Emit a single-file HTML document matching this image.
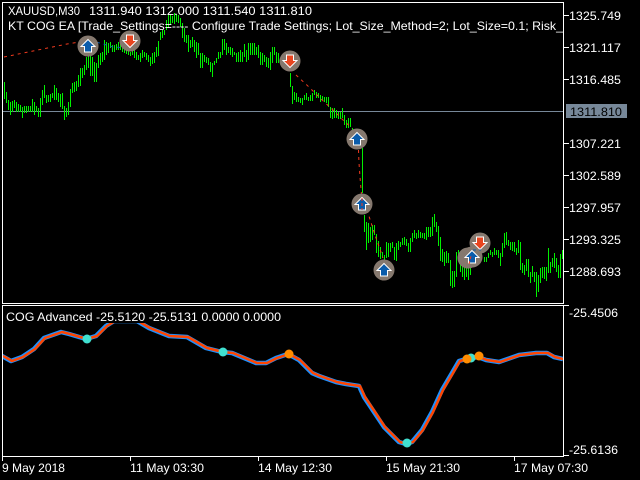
<!DOCTYPE html>
<html><head><meta charset="utf-8"><style>
html,body{margin:0;padding:0;background:#000;width:640px;height:480px;overflow:hidden}
svg{display:block}
text{font-family:"Liberation Sans",sans-serif;font-size:12px;fill:#fff}
</style></head><body>
<svg width="640" height="480" viewBox="0 0 640 480" xmlns="http://www.w3.org/2000/svg">
<defs>
<clipPath id="m"><rect x="3" y="3" width="560" height="300"/></clipPath>
<clipPath id="s"><rect x="3" y="323" width="560" height="133"/></clipPath>
<g id="up"><circle r="10.5" fill="#85786e"/><path d="M0-6.5L7 0.5H3.5V6H-3.5V0.5H-7Z" fill="#0a5cab" stroke="#fff" stroke-width="1"/></g>
<g id="dn"><circle r="10.5" fill="#85786e"/><path d="M0 6.5L7-0.5H3.5V-6H-3.5V-0.5H-7Z" fill="#e8451f" stroke="#fff" stroke-width="1"/></g>
</defs>
<rect width="640" height="480" fill="#000"/>
<rect x="3" y="111" width="560" height="1" fill="#778899"/>
<g clip-path="url(#m)">
<g transform="translate(.5 0)"><path fill="none" stroke="#00f000" stroke-width="1" shape-rendering="crispEdges" d="M4 82V99M6 92V103M8 100V110M10 102V115M12 101V112M14 100V108M16 102V112M18 104V112M20 105V112M22 107V118M24 106V113M26 106V113M28 106V112M30 106V112M32 99V112M34 102V115M36 106V112M38 108V117M40 98V117M42 90V105M44 85V98M46 95V103M48 95V102M50 94V102M52 93V98M54 85V100M56 88V100M58 93V102M60 94V107M62 93V109M64 106V120M66 108V117M68 102V115M70 89V107M72 83V93M74 82V92M76 81V91M78 75V87M80 68V86M82 68V78M84 65V75M86 57V70M88 50V68M90 55V76M92 57V76M94 62V82M96 63V82M98 55V68M100 53V65M102 52V62M104 40V60M106 42V55M108 43V53M110 42V48M112 45V52M114 45V52M116 44V50M118 42V50M120 43V50M122 44V52M124 46V53M126 48V54M128 50V55M130 52V56M132 50V55M134 50V58M136 52V60M138 55V60M140 53V62M142 50V58M144 52V57M146 53V60M148 55V62M150 57V66M152 53V64M154 52V63M156 47V57M158 41V56M160 32V40M162 30V38M164 30V35M166 20V30M168 15V28M170 14V25M172 16V23M174 13V24M176 14V22M178 15V23M180 18V27M182 23V38M184 28V42M186 35V43M188 35V52M190 40V48M192 37V47M194 40V52M196 42V58M198 43V55M200 53V68M202 53V68M204 55V62M206 57V63M208 58V65M210 62V72M212 63V77M214 61V65M216 58V63M218 52V59M220 52V58M222 39V55M224 39V50M226 43V55M228 47V53M230 47V55M232 48V57M234 52V55M236 53V62M238 52V62M240 50V62M242 52V62M244 44V57M246 50V62M248 43V60M250 43V55M252 43V55M254 43V55M256 47V55M258 45V58M260 52V65M262 53V65M264 55V62M266 57V67M268 58V68M270 52V70M272 47V63M274 47V55M276 52V63M278 53V63M290 73V87M292 86V104M294 92V100M296 93V102M298 97V102M300 98V103M302 98V105M304 95V100M306 93V100M308 97V101M310 95V101M312 93V101M314 90V95M316 92V98M318 93V98M320 95V102M322 96V100M324 97V102M326 97V103M328 97V107M330 107V118M332 108V119M334 108V118M336 110V118M338 112V119M340 112V119M342 108V118M344 115V125M346 120V128M348 118V128M350 118V127M352 128V133M362 148V193M364 215V232M366 222V250M368 223V243M370 227V242M372 225V240M374 225V235M376 234V253M378 241V257M380 247V259M382 252V258M384 255V262M386 242V258M388 243V257M390 243V252M392 242V248M394 247V260M396 243V261M398 241V250M400 242V247M402 238V245M404 237V245M406 239V246M408 243V252M410 238V252M412 233V242M414 230V238M416 233V239M418 230V238M420 232V238M422 233V238M424 233V239M426 227V240M428 227V237M430 227V237M432 217V236M434 214V227M436 222V232M438 226V246M440 237V261M442 249V262M444 252V266M446 251V263M448 253V263M450 260V286M452 271V288M454 271V287M456 252V277M458 250V260M460 252V272M462 260V277M464 262V280M466 265V277M468 265V280M470 262V275M484 257V262M486 257V262M488 253V258M490 250V255M492 252V257M494 248V255M496 250V255M498 250V258M500 253V266M502 243V257M504 233V248M506 232V245M508 240V246M510 242V250M512 242V251M514 242V252M516 248V255M518 240V253M520 242V270M522 263V273M524 265V275M526 259V271M528 259V277M530 272V283M532 266V277M534 272V282M536 272V297M538 275V292M540 268V283M542 267V278M544 267V279M546 267V281M548 248V273M550 262V273M552 258V267M554 253V268M556 258V272M558 265V278M560 254V278M562 250V259"/></g>
<g fill="none" stroke-width="1" stroke-dasharray="3 4">
<polyline stroke="#f03a1e" points="4,57 33,51 67,44 80,42"/>
<polyline stroke="#0a5cab" points="90,41 100,43 113,47 127,48"/>
<polyline stroke="#f03a1e" points="296,75 310,88 321,99 333,110 345,122 352,128"/>
<polyline stroke="#f03a1e" points="358.5,150 359,163 360,177 361.5,195"/>
<polyline stroke="#f03a1e" points="367,210 375,235 383,258"/>
</g>
<use href="#up" x="88" y="46"/>
<use href="#dn" x="130" y="41"/>
<use href="#dn" x="290" y="61"/>
<use href="#up" x="357" y="139"/>
<use href="#up" x="362" y="204"/>
<use href="#up" x="384" y="270"/>
<circle cx="468" cy="258" r="10.5" fill="#85786e"/>
<use href="#up" x="472" y="257"/>
<use href="#dn" x="480" y="243"/>
<polyline fill="none" stroke="#0a5cab" stroke-dasharray="3 3" points="473,250 481,250"/>
<polyline fill="none" stroke="#f03a1e" stroke-dasharray="3 2" points="469,264 471,256"/>
<polyline fill="none" stroke="#f03a1e" stroke-dasharray="3 2" points="362,198 362,210"/>
</g>
<text x="8" y="15" textLength="72" lengthAdjust="spacingAndGlyphs">XAUUSD,M30</text>
<text x="89" y="15" textLength="223" lengthAdjust="spacingAndGlyphs">1311.940 1312.000 1311.540 1311.810</text>
<g clip-path="url(#m)"><text x="8" y="30" textLength="555" lengthAdjust="spacingAndGlyphs">KT COG EA [Trade_Settings=---- Configure Trade Settings; Lot_Size_Method=2; Lot_Size=0.1; Risk_</text></g>
<g fill="#fff" shape-rendering="crispEdges">
<rect x="2" y="2" width="562" height="1"/>
<rect x="2" y="2" width="1" height="302"/>
<rect x="563" y="2" width="1" height="302"/>
<rect x="2" y="303" width="562" height="1"/>
<rect x="2" y="305" width="562" height="1"/>
<rect x="2" y="305" width="1" height="156"/>
<rect x="563" y="305" width="1" height="152"/>
<rect x="2" y="456" width="562" height="1"/>
<rect x="564" y="15" width="5" height="1"/>
<rect x="564" y="47" width="5" height="1"/>
<rect x="564" y="79" width="5" height="1"/>
<rect x="564" y="143" width="5" height="1"/>
<rect x="564" y="175" width="5" height="1"/>
<rect x="564" y="207" width="5" height="1"/>
<rect x="564" y="239" width="5" height="1"/>
<rect x="564" y="271" width="5" height="1"/>
<rect x="564" y="305" width="5" height="1"/>
<rect x="564" y="455" width="5" height="1"/>
<rect x="130" y="457" width="1" height="4"/>
<rect x="258" y="457" width="1" height="4"/>
<rect x="386" y="457" width="1" height="4"/>
<rect x="514" y="457" width="1" height="4"/>
</g>
<rect x="566" y="104" width="61" height="14" fill="#778899"/>
<g>
<text x="569" y="20" textLength="52" lengthAdjust="spacingAndGlyphs">1325.749</text>
<text x="569" y="52" textLength="52" lengthAdjust="spacingAndGlyphs">1321.117</text>
<text x="569" y="84" textLength="52" lengthAdjust="spacingAndGlyphs">1316.485</text>
<text x="570" y="116" textLength="52" lengthAdjust="spacingAndGlyphs" style="fill:#000">1311.810</text>
<text x="569" y="148" textLength="52" lengthAdjust="spacingAndGlyphs">1307.221</text>
<text x="569" y="180" textLength="52" lengthAdjust="spacingAndGlyphs">1302.589</text>
<text x="569" y="212" textLength="52" lengthAdjust="spacingAndGlyphs">1297.957</text>
<text x="569" y="244" textLength="52" lengthAdjust="spacingAndGlyphs">1293.325</text>
<text x="569" y="276" textLength="52" lengthAdjust="spacingAndGlyphs">1288.693</text>
<text x="569" y="317" textLength="49" lengthAdjust="spacingAndGlyphs">-25.4506</text>
<text x="569" y="454" textLength="49" lengthAdjust="spacingAndGlyphs">-25.6136</text>
</g>
<text x="6" y="321" textLength="275" lengthAdjust="spacingAndGlyphs">COG Advanced -25.5120 -25.5131 0.0000 0.0000</text>
<g clip-path="url(#s)" fill="none" stroke-linejoin="round">
<polyline transform="translate(-1 0)" stroke="#1e90ff" stroke-width="4.5" points="3,356 12,361 23,357 35,349 45,338 62,332 70,334 87,339 97,336 107,326 115,321 138,321 150,328 170,336 188,337 207,348 223,352 233,353 257,363 267,363 277,358 289,354 300,360 313,373 320,376 337,382 347,384 360,386 365,397 375,412 385,427 400,442 407,444 413,442 423,430 433,412 443,390 453,373 460,361 467,359 479,357 487,360 500,362 520,355 537,353 548,353 555,357 564,359"/>
<polyline stroke="#ff4500" stroke-width="2.5" points="3,356 12,361 23,357 35,349 45,338 62,332 70,334 87,339 97,336 107,326 115,321 138,321 150,328 170,336 188,337 207,348 223,352 233,353 257,363 267,363 277,358 289,354 300,360 313,373 320,376 337,382 347,384 360,386 365,397 375,412 385,427 400,442 407,444 413,442 423,430 433,412 443,390 453,373 460,361 467,359 479,357 487,360 500,362 520,355 537,353 548,353 555,357 563,359"/>
</g>
<circle cx="87" cy="339" r="4.5" fill="#40e0d0"/>
<circle cx="223" cy="352" r="4.5" fill="#40e0d0"/>
<circle cx="407" cy="443" r="4.5" fill="#40e0d0"/>
<circle cx="471" cy="358" r="4.5" fill="#40e0d0"/>
<circle cx="289" cy="354" r="4.5" fill="#ff8c00"/>
<circle cx="467" cy="359" r="4.5" fill="#ff8c00"/>
<circle cx="479" cy="356" r="4.5" fill="#ff8c00"/>
<text x="2" y="472" textLength="63" lengthAdjust="spacingAndGlyphs">9 May 2018</text>
<text x="130" y="472" textLength="74" lengthAdjust="spacingAndGlyphs">11 May 03:30</text>
<text x="258" y="472" textLength="74" lengthAdjust="spacingAndGlyphs">14 May 12:30</text>
<text x="386" y="472" textLength="74" lengthAdjust="spacingAndGlyphs">15 May 21:30</text>
<text x="514" y="472" textLength="74" lengthAdjust="spacingAndGlyphs">17 May 07:30</text>
</svg>
</body></html>
